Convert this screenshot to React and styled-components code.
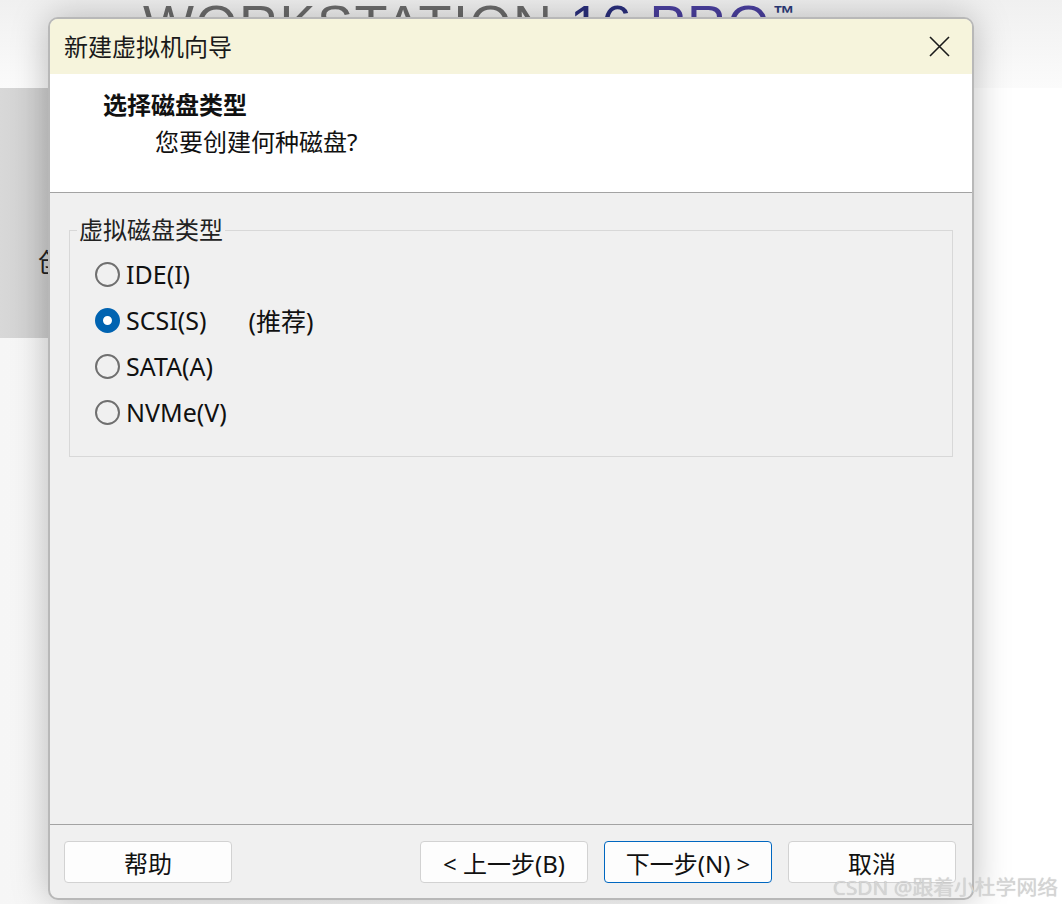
import React from "react";
import styled, { createGlobalStyle } from "styled-components";

const GlobalStyle = createGlobalStyle`
  html, body {
    margin: 0;
    padding: 0;
    background: #ffffff;
  }
`;

const SANS = `"Noto Sans", "Noto Sans CJK SC", sans-serif`;

const Stage = styled.div`
  position: relative;
  width: 1062px;
  height: 904px;
  overflow: hidden;
  background: linear-gradient(to right, #f6f6f6, #ffffff 60%);
  font-family: ${SANS};
  color: #1a1a1a;
`;

const BrandBar = styled.div`
  height: 88px;
  padding-left: 143px;
  box-sizing: border-box;
  background: linear-gradient(to bottom, #f0f0f0, #fbfbfb);
  overflow: hidden;
`;

const Brand = styled.div`
  margin-top: -3px;
  font-family: "Liberation Sans", sans-serif;
  font-size: 54px;
  line-height: 54px;
  letter-spacing: 1.5px;
  color: #6b6b6b;
  white-space: nowrap;
`;

const BrandAccent = styled.span`
  color: ${props => props.$color};
`;

const BrandMark = styled.span`
  position: relative;
  top: -22px;
  margin-left: 2px;
  font-size: 22px;
  font-weight: 700;
  color: #2b3a78;
`;

const Band = styled.div`
  width: 560px;
  height: 250px;
  background: linear-gradient(to right, #d8d8d8, #cdcdcd 60px);
  display: flex;
  align-items: flex-end;
  padding: 0 0 58px 38px;
  box-sizing: border-box;
`;

const BandText = styled.span`
  font-size: 26px;
  color: #222;
  white-space: nowrap;
`;

const Dialog = styled.div`
  position: absolute;
  left: 48px;
  top: 17px;
  width: 926px;
  height: 883px;
  box-sizing: border-box;
  border: 2px solid #b8b8b8;
  border-radius: 10px;
  overflow: hidden;
  display: flex;
  flex-direction: column;
  background: #f0f0f0;
  box-shadow: 0 0 36px rgba(0, 0, 0, 0.26);
`;

const TitleBar = styled.div`
  height: 55px;
  flex-shrink: 0;
  display: flex;
  align-items: center;
  justify-content: space-between;
  padding: 0 22px 0 14px;
  background: #f6f4dc;
`;

const Title = styled.span`
  font-size: 24px;
  line-height: 1;
  color: #1a1a1a;
`;

const CloseButton = styled.button`
  width: 22px;
  height: 22px;
  padding: 0;
  border: none;
  background: transparent;
  display: flex;
  align-items: center;
  justify-content: center;
`;

const Header = styled.div`
  height: 119px;
  flex-shrink: 0;
  box-sizing: border-box;
  background: #ffffff;
  border-bottom: 1px solid #a3a3a3;
  padding: 15px 0 0 53px;
`;

const HeaderTitle = styled.div`
  font-size: 24px;
  font-weight: 700;
  line-height: 32px;
  color: #111;
`;

const HeaderSub = styled.div`
  margin-top: 5px;
  padding-left: 52px;
  font-size: 24px;
  line-height: 32px;
  color: #111;
`;

const Body = styled.div`
  flex: 1;
  padding: 23px 19px 0 19px;
`;

const Group = styled.fieldset`
  margin: 0;
  padding: 0 0 21px 7px;
  border: 1px solid #d8d8d8;
  min-width: 0;
`;

const Legend = styled.legend`
  padding: 0 2px;
  font-size: 24px;
  line-height: 28px;
  color: #222;
`;

const Options = styled.div`
  display: flex;
  flex-direction: column;
  padding: 7px 0 0 18px;
`;

const Option = styled.label`
  height: 46px;
  display: flex;
  align-items: center;
  gap: 6px;
  font-size: 25px;
  color: #111;
`;

const Radio = styled.span`
  width: 25px;
  height: 25px;
  box-sizing: border-box;
  border-radius: 50%;
  flex-shrink: 0;
  border: ${props => (props.$checked ? "8px solid #0063b1" : "2px solid #6f6f6f")};
  background: ${props => (props.$checked ? "#ffffff" : "transparent")};
`;

const Hint = styled.span`
  margin-left: 36px;
`;

const Footer = styled.div`
  height: 74px;
  flex-shrink: 0;
  box-sizing: border-box;
  border-top: 1px solid #a3a3a3;
  display: flex;
  align-items: flex-start;
  gap: 16px;
  padding: 16px 16px 0 14px;
`;

const Spacer = styled.div`
  flex: 1;
`;

const Button = styled.button`
  width: 168px;
  height: 42px;
  box-sizing: border-box;
  border-radius: 4px;
  border: 1px solid ${props => (props.$primary ? "#0067c0" : "#d2d2d2")};
  background: #fdfdfd;
  font-family: ${SANS};
  font-size: 24px;
  color: #111;
  padding: 0;
  display: flex;
  align-items: center;
  justify-content: center;
`;

const Watermark = styled.div`
  position: absolute;
  right: 4px;
  bottom: 4px;
  font-size: 20.8px;
  line-height: 26px;
  color: #d4d4d4;
  text-shadow: 0 0 1px rgba(0, 0, 0, 0.18);
  white-space: nowrap;
`;

const options = [
  { label: "IDE(I)" },
  { label: "SCSI(S)", hint: "(推荐)", checked: true },
  { label: "SATA(A)" },
  { label: "NVMe(V)" },
];

const App = () => {
  return (
    <>
      <GlobalStyle />
      <Stage>
        <BrandBar>
          <Brand>
            WORKSTATION <BrandAccent $color="#2a2f7c">16</BrandAccent>{" "}
            <BrandAccent $color="#4a3f9e">PRO</BrandAccent>
            <BrandMark>™</BrandMark>
          </Brand>
        </BrandBar>
        <Band>
          <BandText>创建新的虚拟机</BandText>
        </Band>

        <Dialog>
          <TitleBar>
            <Title>新建虚拟机向导</Title>
            <CloseButton aria-label="关闭">
              <svg width="21" height="21" viewBox="0 0 21 21">
                <path d="M1 1 L20 20 M20 1 L1 20" stroke="#1a1a1a" strokeWidth="1.6" fill="none" />
              </svg>
            </CloseButton>
          </TitleBar>
          <Header>
            <HeaderTitle>选择磁盘类型</HeaderTitle>
            <HeaderSub>您要创建何种磁盘?</HeaderSub>
          </Header>
          <Body>
            <Group>
              <Legend>虚拟磁盘类型</Legend>
              <Options>
                {options.map(opt => (
                  <Option key={opt.label}>
                    <Radio $checked={opt.checked} />
                    {opt.label}
                    {opt.hint && <Hint>{opt.hint}</Hint>}
                  </Option>
                ))}
              </Options>
            </Group>
          </Body>
          <Footer>
            <Button>帮助</Button>
            <Spacer />
            <Button>&lt; 上一步(B)</Button>
            <Button $primary>下一步(N) &gt;</Button>
            <Button>取消</Button>
          </Footer>
        </Dialog>

        <Watermark>CSDN @跟着小杜学网络</Watermark>
      </Stage>
    </>
  );
};

export default App;
